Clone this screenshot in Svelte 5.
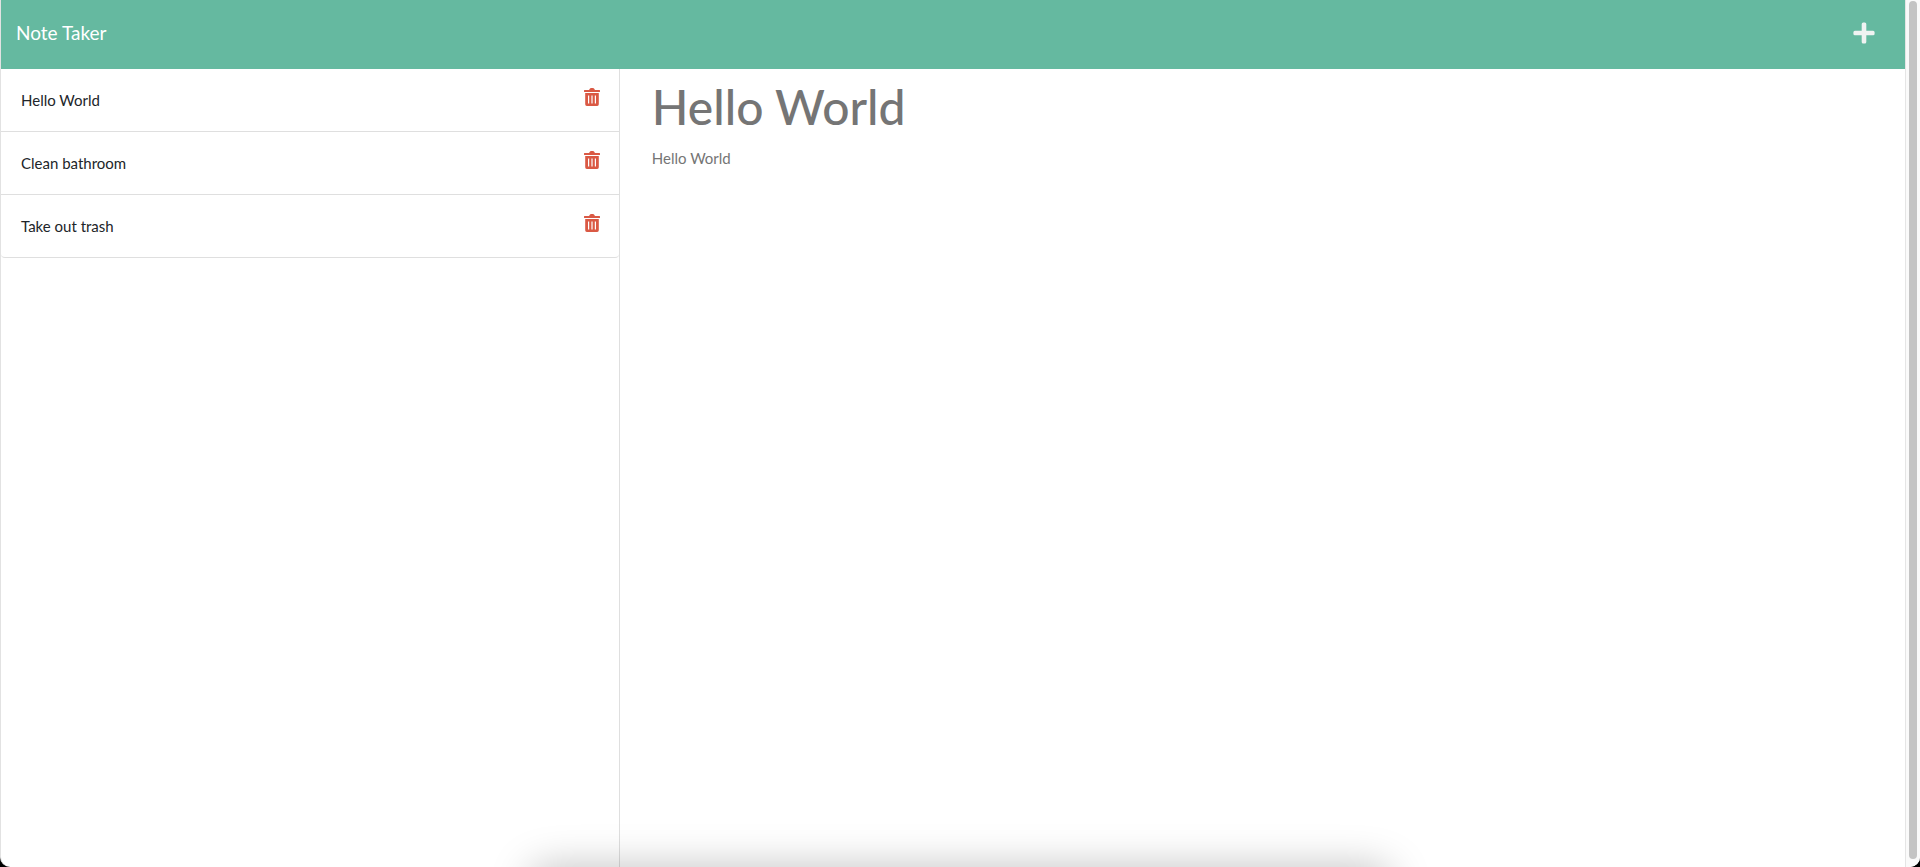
<script>
  let notes = $state([
    { id: 1, title: 'Hello World', text: 'Hello World' },
    { id: 2, title: 'Clean bathroom', text: 'Clean bathroom' },
    { id: 3, title: 'Take out trash', text: 'Take out trash' }
  ]);
  let active = $state({ title: 'Hello World', text: 'Hello World' });

  function remove(id) {
    notes = notes.filter((note) => note.id !== id);
  }

  function create() {
    active = { title: '', text: '' };
  }
</script>

<div class="window">
  <div class="page">
    <header>
      <a class="brand" href="#notes">Note Taker</a>
      <button class="add" aria-label="New note" onclick={create}>
        <svg viewBox="0 0 22 22" width="22" height="22" aria-hidden="true">
          <path d="M10.200 .4h1.600a1.500 1.500 0 0 1 1.500 1.500v6.800h6.800a1.500 1.500 0 0 1 1.500 1.500v1.600a1.500 1.500 0 0 1-1.500 1.500h-6.800v6.800a1.500 1.500 0 0 1-1.500 1.500h-1.600a1.500 1.500 0 0 1-1.500-1.500v-6.800H1.900a1.500 1.500 0 0 1-1.500-1.500v-1.600a1.500 1.500 0 0 1 1.500-1.500h6.800V1.900a1.500 1.500 0 0 1 1.500-1.500z" />
        </svg>
      </button>
    </header>

    <main>
      <aside>
        <ul>
          {#each notes as note (note.id)}
            <li>
              <button class="title" onclick={() => (active = note)}>{note.title}</button>
              <button class="delete" aria-label={`Delete ${note.title}`} onclick={() => remove(note.id)}>
                <svg viewBox="0 0 16 18" width="16" height="18" aria-hidden="true">
                  <path d="M0.5 2H5l1-1.4Q6.300 0 7 0h2q.7 0 1 .6L11 2h4.500q.5 0 .5.5V3.500q0 .5-.5.5H.5Q0 4 0 3.500V2.500Q0 2 .5 2z" />
                  <path fill-rule="evenodd" d="M1.200 5H14.800V16.300Q14.800 18 13.200 18H2.800Q1.200 18 1.200 16.300zM4 7.500V15.500H5.200V7.500zM7.400 7.500V15.500H8.600V7.500zM10.800 7.500V15.500H12V7.500z" />
                </svg>
              </button>
            </li>
          {/each}
        </ul>
      </aside>
      <article>
        <h1>{active.title}</h1>
        <p>{active.text}</p>
      </article>
    </main>
  </div>
  <div class="track" aria-hidden="true"><div class="thumb"></div></div>
  <div class="dock-shadow" aria-hidden="true"></div>
</div>

<style>
  :global(body) {
    margin: 0;
    background: #000;
  }

  .window {
    position: relative;
    display: flex;
    box-sizing: border-box;
    min-height: 100vh;
    overflow: hidden;
    border-left: 1px solid #e2e2e2;
    border-radius: 0 0 10px 10px;
    background: #fff;
    color: #212529;
    font: 15px/24px Lato, sans-serif;
  }

  .page {
    flex: 1;
    display: flex;
    flex-direction: column;
  }

  button {
    padding: 0;
    border: 0;
    background: none;
    color: inherit;
    font: inherit;
    cursor: pointer;
  }

  svg {
    display: block;
    fill: currentColor;
  }

  header {
    display: flex;
    justify-content: space-between;
    align-items: center;
    box-sizing: border-box;
    height: 69px;
    padding: 0 30px 4px 15px;
    background: #65b9a0;
  }

  .brand {
    color: #fff;
    font-size: 19px;
    text-decoration: none;
  }

  .add {
    color: #f0f3f2;
  }

  main {
    flex: 1;
    display: flex;
  }

  aside {
    flex: 0 0 32.5%;
    box-sizing: border-box;
    border-right: 1px solid #dfdfdf;
  }

  ul {
    margin: 0;
    padding: 0;
    list-style: none;
    border-bottom: 1px solid #dfdfdf;
    border-radius: 0 0 4px 4px;
  }

  li {
    display: flex;
    justify-content: space-between;
    align-items: flex-start;
    padding: 19px 19px 19px 20px;
  }

  li + li {
    border-top: 1px solid #dfdfdf;
  }

  .title {
    flex: 1;
    text-align: left;
  }

  .delete {
    color: #da5944;
  }

  article {
    flex: 1;
    padding: 9px 32px;
    color: #757575;
  }

  h1 {
    margin: 0 0 10px;
    font-size: 48px;
    font-weight: 500;
    line-height: 58px;
  }

  p {
    margin: 0;
  }

  .track {
    flex: 0 0 15px;
    box-sizing: border-box;
    padding: 1px 3px 8px;
    border-left: 1px solid #e5e5e5;
    background: #fafafa;
    display: flex;
  }

  .thumb {
    flex: 1;
    border-radius: 4px;
    background: #c4c4c4;
  }

  .dock-shadow {
    position: absolute;
    left: 27.5%;
    right: 27.5%;
    bottom: -40px;
    height: 40px;
    border-radius: 20px;
    box-shadow: 0 0 40px rgba(0, 0, 0, 0.25);
    pointer-events: none;
  }
</style>
